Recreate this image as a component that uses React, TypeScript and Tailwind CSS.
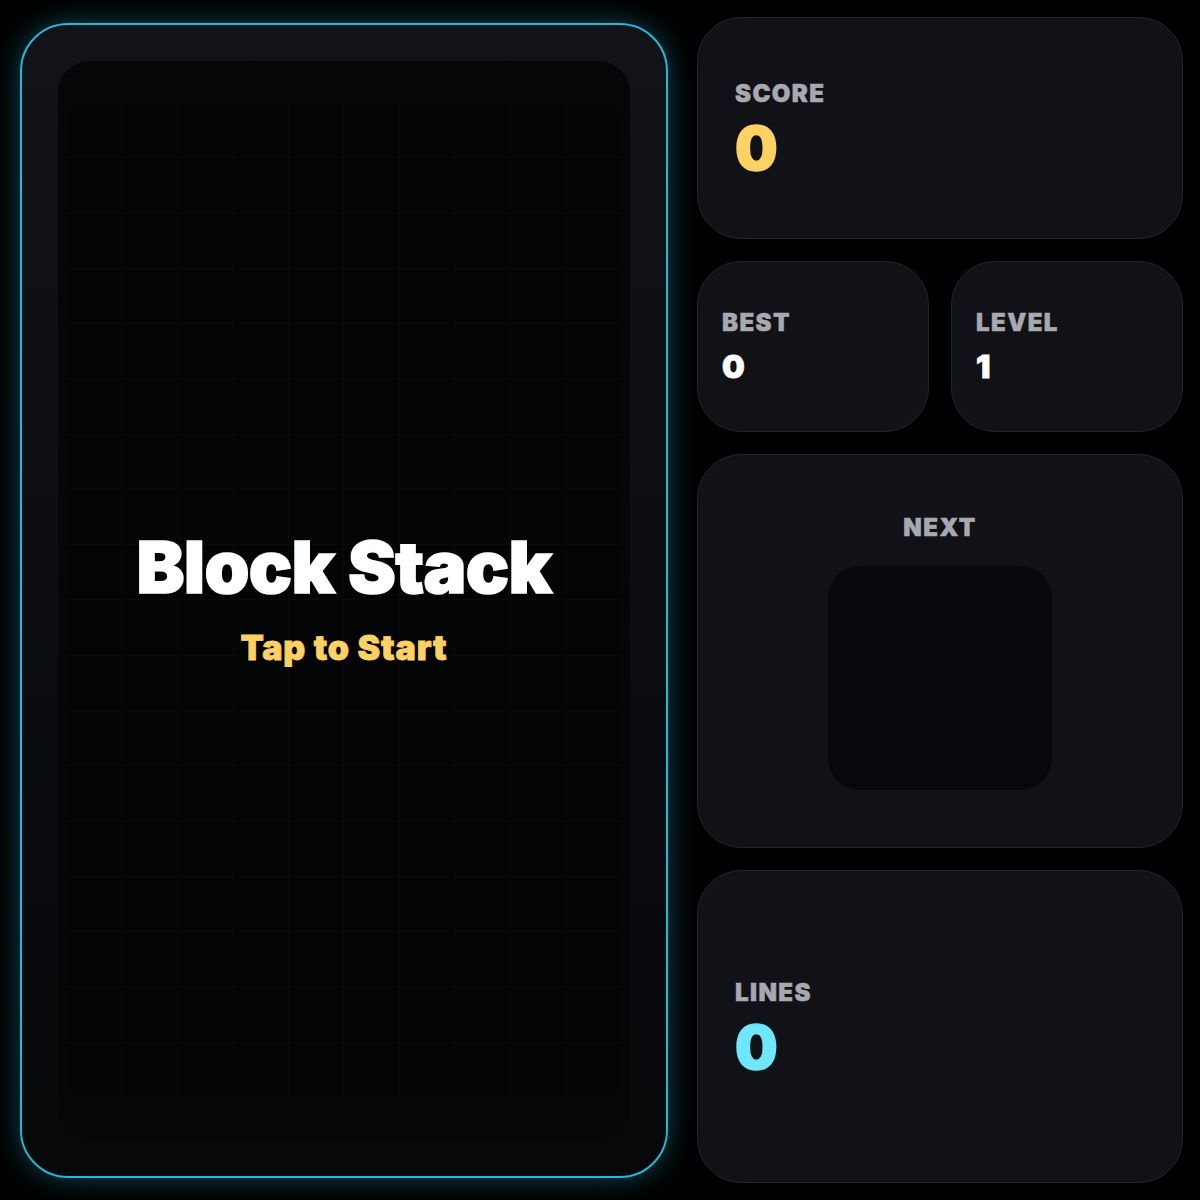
import { useMemo } from 'react';

const COLS = 10;
const ROWS = 18;

interface StatCardProps {
  label: string;
  value: string | number;
  valueClass: string;
  className?: string;
}

function StatCard({ label, value, valueClass, className = '' }: StatCardProps) {
  return (
    <div
      className={`flex flex-col justify-center rounded-[44px] border border-[#23252b] bg-[#111217] ${className}`}
    >
      <span className="text-2xl font-black leading-8 tracking-[0.06em] text-[#a7a9af] [-webkit-text-stroke:0.5px_#a7a9af]">
        {label}
      </span>
      <span className={`mt-2 font-black ${valueClass}`}>{value}</span>
    </div>
  );
}

/**
 * Empty playfield: 10x18 cells with faint grid lines.
 */
function Playfield() {
  const cells = useMemo(() => Array.from({ length: COLS * ROWS }, (_, i) => i), []);

  return (
    <div className="grid aspect-[10/18] w-full grid-cols-10 grid-rows-[repeat(18,minmax(0,1fr))] gap-px overflow-hidden rounded-[20px] bg-[#090a0c]">
      {cells.map((i) => (
        <div key={i} className="bg-[#030405]" />
      ))}
    </div>
  );
}

export default function App() {
  return (
    <div
      className="flex h-[1200px] w-[1200px] gap-[29px] bg-black py-[17px] pl-5 pr-[17px]"
      style={{ fontFamily: 'Inter, "Noto Sans", sans-serif' }}
    >
      {/* Board */}
      <div className="h-[1155px] w-[648px] self-center rounded-[48px] border-2 border-[#22b8dc] bg-gradient-to-b from-[#121318] to-[#06080a] p-9 shadow-[0_0_28px_rgba(34,200,238,0.35)]">
        <div className="relative flex h-full items-center justify-center rounded-[32px] bg-[#050608] px-2.5">
          <Playfield />

          {/* Start overlay */}
          <div className="absolute inset-0 flex flex-col items-center justify-center pb-1">
            <h1 className="text-7xl font-black leading-none tracking-[-0.01em] text-white [-webkit-text-stroke:1.5px_white]">
              Block Stack
            </h1>
            <p className="mt-7 text-[34px] font-black leading-none tracking-[0.025em] text-[#fdd163] [-webkit-text-stroke:0.8px_#fdd163]">
              Tap to Start
            </p>
          </div>
        </div>
      </div>

      {/* Side panel */}
      <div className="flex w-[486px] flex-col gap-[22px]">
        <StatCard
          label="SCORE"
          value={0}
          valueClass="text-6xl leading-none text-[#fdd163] [-webkit-text-stroke:1.5px_#fdd163]"
          className="h-[222px] px-[37px]"
        />

        <div className="grid h-[171px] grid-cols-2 gap-[22px]">
          <StatCard
            label="BEST"
            value={0}
            valueClass="text-[32px] leading-10 text-white [-webkit-text-stroke:0.8px_white]"
            className="rounded-[40px] px-6"
          />
          <StatCard
            label="LEVEL"
            value={1}
            valueClass="text-[32px] leading-10 text-white [-webkit-text-stroke:0.8px_white]"
            className="rounded-[40px] px-6"
          />
        </div>

        <div className="flex h-[394px] flex-col items-center justify-center rounded-[44px] border border-[#23252b] bg-[#111217]">
          <span className="text-2xl font-black leading-8 tracking-[0.06em] text-[#a7a9af] [-webkit-text-stroke:0.5px_#a7a9af]">
            NEXT
          </span>
          <div className="mt-[22px] h-[224px] w-[224px] rounded-[32px] bg-[#07080b]" />
        </div>

        <StatCard
          label="LINES"
          value={0}
          valueClass="text-6xl leading-none text-[#6ee7fb] [-webkit-text-stroke:1.5px_#6ee7fb]"
          className="flex-1 px-[37px]"
        />
      </div>
    </div>
  );
}
